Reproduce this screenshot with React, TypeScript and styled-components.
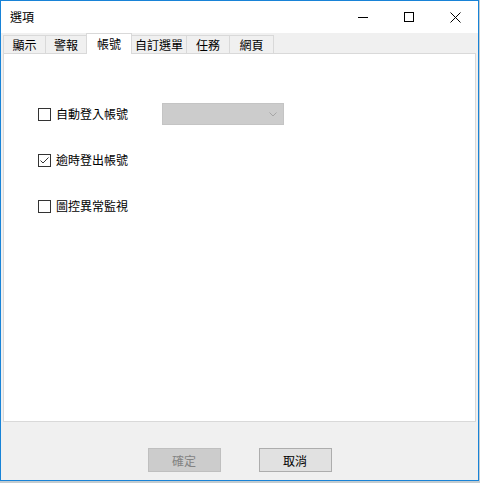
import React from "react";
import styled, { createGlobalStyle } from "styled-components";

const Global = createGlobalStyle`
  html, body { margin: 0; padding: 0; background: #c4ccd0; }
  body { font-family: "Noto Sans CJK TC", "Noto Sans", sans-serif; font-size: 12px; color: #000; }
  * { box-sizing: border-box; }
`;

const Win = styled.div`
  width: 479px;
  height: 481px;
  border: 1px solid #1883d7;
  background: #f0f0f0;
  display: flex;
  flex-direction: column;
`;

const TitleBar = styled.div`
  height: 32px;
  background: #fff;
  display: flex;
  align-items: center;
`;

const Title = styled.div`
  flex: 1;
  padding-left: 9px;
  font-size: 12px;
  line-height: 16px;
`;

const CapBtn = styled.div`
  width: 46px;
  height: 32px;
  display: flex;
  align-items: center;
  justify-content: center;
`;

const Body = styled.div`
  flex: 1;
  display: flex;
  flex-direction: column;
  padding: 0 2px;
`;

const TabRow = styled.div`
  height: 20px;
  display: flex;
  align-items: flex-end;
  padding-left: 0;
  position: relative;
  z-index: 1;
`;

const Tab = styled.div<{ $w: number; $active?: boolean }>`
  width: ${(p) => p.$w}px;
  height: ${(p) => (p.$active ? 21 : 18)}px;
  margin-bottom: ${(p) => (p.$active ? -1 : 0)}px;
  background: ${(p) => (p.$active ? "#fff" : "#f0f0f0")};
  border: 1px solid #d9d9d9;
  border-bottom: none;
  display: flex;
  align-items: center;
  justify-content: center;
  font-size: 12px;
  line-height: 16px;
  & + & { margin-left: -1px; }
`;

const Panel = styled.div`
  height: 369px;
  background: #fff;
  border: 1px solid #d9d9d9;
  padding: 49px 0 0 34px;
  display: flex;
  flex-direction: column;
  gap: 24px;
`;

const Row = styled.div`
  height: 22px;
  display: flex;
  align-items: center;
`;

const CheckLabel = styled.label<{ $w?: number }>`
  display: flex;
  align-items: center;
  gap: 5px;
  width: ${(p) => (p.$w ? `${p.$w}px` : "auto")};
  font-size: 12px;
  line-height: 16px;
`;

const Box = styled.span`
  width: 13px;
  height: 13px;
  border: 1px solid #333;
  background: #fff;
  display: flex;
  align-items: center;
  justify-content: center;
`;

const Combo = styled.div`
  width: 122px;
  height: 22px;
  background: #cccccc;
  border: 1px solid #c4c4c4;
  display: flex;
  align-items: center;
  justify-content: flex-end;
  padding-right: 6px;
`;

const Footer = styled.div`
  flex: 1;
  display: flex;
  justify-content: center;
  align-items: flex-start;
  gap: 38px;
  padding-top: 26px;
`;

const Button = styled.div<{ $disabled?: boolean }>`
  width: 73px;
  height: 24px;
  display: flex;
  align-items: center;
  justify-content: center;
  font-size: 12px;
  background: ${(p) => (p.$disabled ? "#cccccc" : "#e1e1e1")};
  border: 1px solid ${(p) => (p.$disabled ? "#bfbfbf" : "#adadad")};
  color: ${(p) => (p.$disabled ? "#838383" : "#000")};
`;

const Check = ({ checked }: { checked?: boolean }) => (
  <Box>
    {checked && (
      <svg width="11" height="11" viewBox="0 0 11 11">
        <path d="M1.5 5.5 L4 8 L9.5 2.5" fill="none" stroke="#333" strokeWidth="1" />
      </svg>
    )}
  </Box>
);

const tabs = [
  { t: "顯示", w: 43 },
  { t: "警報", w: 42 },
  { t: "帳號", w: 46, a: true },
  { t: "自訂選單", w: 56 },
  { t: "任務", w: 44 },
  { t: "網頁", w: 45 },
];

export default function App() {
  return (
    <>
      <Global />
      <Win>
        <TitleBar>
          <Title>選項</Title>
          <CapBtn>
            <svg width="10" height="10" viewBox="0 0 10 10">
              <path d="M0 5.5 H10" stroke="#000" strokeWidth="1" />
            </svg>
          </CapBtn>
          <CapBtn>
            <svg width="10" height="10" viewBox="0 0 10 10">
              <rect x="0.5" y="0.5" width="9" height="9" fill="none" stroke="#000" strokeWidth="1" />
            </svg>
          </CapBtn>
          <CapBtn>
            <svg width="11" height="11" viewBox="0 0 11 11">
              <path d="M0.5 0.5 L10.5 10.5 M10.5 0.5 L0.5 10.5" stroke="#000" strokeWidth="1" />
            </svg>
          </CapBtn>
        </TitleBar>
        <Body>
          <TabRow>
            {tabs.map((x) => (
              <Tab key={x.t} $w={x.w} $active={x.a}>
                {x.t}
              </Tab>
            ))}
          </TabRow>
          <Panel>
            <Row>
              <CheckLabel $w={124}>
                <Check />
                自動登入帳號
              </CheckLabel>
              <Combo>
                <svg width="8" height="5" viewBox="0 0 8 5">
                  <path d="M0.5 0.5 L4 4 L7.5 0.5" fill="none" stroke="#a6a6a6" strokeWidth="1" />
                </svg>
              </Combo>
            </Row>
            <Row>
              <CheckLabel>
                <Check checked />
                逾時登出帳號
              </CheckLabel>
            </Row>
            <Row>
              <CheckLabel>
                <Check />
                圖控異常監視
              </CheckLabel>
            </Row>
          </Panel>
          <Footer>
            <Button $disabled>確定</Button>
            <Button>取消</Button>
          </Footer>
        </Body>
      </Win>
    </>
  );
}
